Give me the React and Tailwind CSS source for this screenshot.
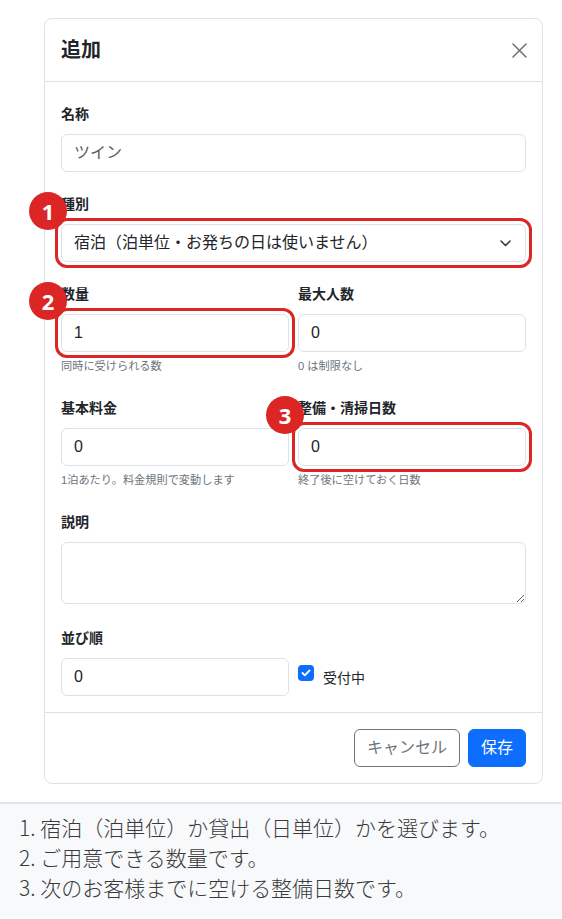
import React from 'react';

const ui = { fontFamily: '"Liberation Sans", "Noto Sans CJK JP", sans-serif' };

function Badge({ n }) {
    return (
        <span
            className="absolute -left-8 -top-8 z-10 flex size-[38px] items-center justify-center rounded-full bg-[#dc2626] text-[22px] font-bold text-white"
            style={{ fontFamily: '"Noto Sans", "Noto Sans CJK JP", sans-serif' }}
        >
            {n}
        </span>
    );
}

function Label({ children }) {
    return <label className="mb-2 block text-sm font-bold leading-6 text-[#212529]">{children}</label>;
}

function Input({ value, placeholder, marked }) {
    return (
        <input
            readOnly
            value={value}
            placeholder={placeholder}
            className={`block h-[38px] w-full rounded-md border border-[#dee2e6] bg-white px-3 text-base text-[#212529] placeholder:text-[#595c5f] ${marked ? 'outline-3 outline-offset-3 outline-[#dc2626]' : 'outline-none'}`}
        />
    );
}

function Help({ children }) {
    return <div className="mt-1 text-[11.2px] leading-5 text-[#6c757d]">{children}</div>;
}

export default function App() {
    return (
        <div className="min-h-[919px] bg-white" style={ui}>
            <div className="pl-[44px] pr-[19px] pt-[18px]">
                <div className="rounded-lg border border-[#dee2e6] bg-white">
                    {/* header */}
                    <div className="flex items-center justify-between border-b border-[#dee2e6] p-4">
                        <h1 className="text-[20px] font-bold leading-[30px] text-[#212529]">追加</h1>
                        <button type="button" className="mr-[-1px] flex size-4 items-center justify-center">
                            <svg width="15" height="15" viewBox="0 0 15 15" fill="none" stroke="#707070" strokeWidth="1.5" strokeLinecap="round">
                                <path d="M1 1l13 13M14 1L1 14" />
                            </svg>
                        </button>
                    </div>

                    {/* body */}
                    <div className="px-4 pb-4 pt-5">
                        <div className="mb-5">
                            <Label>名称</Label>
                            <Input placeholder="ツイン" value="" />
                        </div>

                        <div className="mb-5">
                            <Label>種別</Label>
                            <div className="relative">
                                <Badge n="1" />
                                <div className="flex h-[38px] w-full items-center justify-between rounded-md border border-[#dee2e6] bg-white pl-3 pr-[14px] text-base text-[#212529] outline-3 outline-offset-3 outline-[#dc2626]">
                                    <span>宿泊（泊単位・お発ちの日は使いません）</span>
                                    <svg width="11" height="7" viewBox="0 0 11 7" fill="none" stroke="#343a40" strokeWidth="1.6" strokeLinecap="round" strokeLinejoin="round">
                                        <path d="M1 1l4.5 4.5L10 1" />
                                    </svg>
                                </div>
                            </div>
                        </div>

                        <div className="mb-5 grid grid-cols-2 gap-x-[9px]">
                            <div>
                                <Label>数量</Label>
                                <div className="relative">
                                    <Badge n="2" />
                                    <Input value="1" marked />
                                </div>
                                <Help>同時に受けられる数</Help>
                            </div>
                            <div>
                                <Label>最大人数</Label>
                                <Input value="0" />
                                <Help>0 は制限なし</Help>
                            </div>
                        </div>

                        <div className="mb-5 grid grid-cols-2 gap-x-[9px]">
                            <div>
                                <Label>基本料金</Label>
                                <Input value="0" />
                                <Help>1泊あたり。料金規則で変動します</Help>
                            </div>
                            <div>
                                <Label>整備・清掃日数</Label>
                                <div className="relative">
                                    <Badge n="3" />
                                    <Input value="0" marked />
                                </div>
                                <Help>終了後に空けておく日数</Help>
                            </div>
                        </div>

                        <div className="mb-[22px]">
                            <Label>説明</Label>
                            <textarea
                                rows={2}
                                className="block h-[62px] w-full rounded-md border border-[#dee2e6] px-3 py-1.5 text-base outline-none"
                            />
                        </div>

                        <div className="grid grid-cols-2 gap-x-[9px]">
                            <div>
                                <Label>並び順</Label>
                                <Input value="0" />
                            </div>
                            <div className="flex items-end pb-[8px]">
                                <div className="flex items-start">
                                    <span className="flex size-4 items-center justify-center rounded bg-[#0d6efd]">
                                        <svg width="10" height="8" viewBox="0 0 10 8" fill="none" stroke="#fff" strokeWidth="1.8" strokeLinecap="round" strokeLinejoin="round">
                                            <path d="M1.5 4l2.3 2.3L8.5 1.5" />
                                        </svg>
                                    </span>
                                    <span className="ml-[9px] mt-[3px] text-sm leading-5 text-[#212529]">受付中</span>
                                </div>
                            </div>
                        </div>
                    </div>

                    {/* footer */}
                    <div className="flex justify-end gap-2 border-t border-[#dee2e6] p-4">
                        <button type="button" className="h-[38px] rounded-md border border-[#6c757d] bg-white px-3 text-base text-[#6c757d]">
                            キャンセル
                        </button>
                        <button type="button" className="h-[38px] rounded-md border border-[#0d6efd] bg-[#0d6efd] px-3 text-base text-white">
                            保存
                        </button>
                    </div>
                </div>
            </div>

            <div
                className="mt-[18px] border-t-2 border-[#e4e6e9] bg-[#f8f9fa] px-[19px] pb-4 pt-[8px] text-[21px] font-light leading-[30px] text-[#3a3a3a]"
                style={{ fontFamily: '"Noto Sans CJK JP", sans-serif' }}
            >
                <div>1. 宿泊（泊単位）か貸出（日単位）かを選びます。</div>
                <div>2. ご用意できる数量です。</div>
                <div>3. 次のお客様までに空ける整備日数です。</div>
            </div>
        </div>
    );
}
